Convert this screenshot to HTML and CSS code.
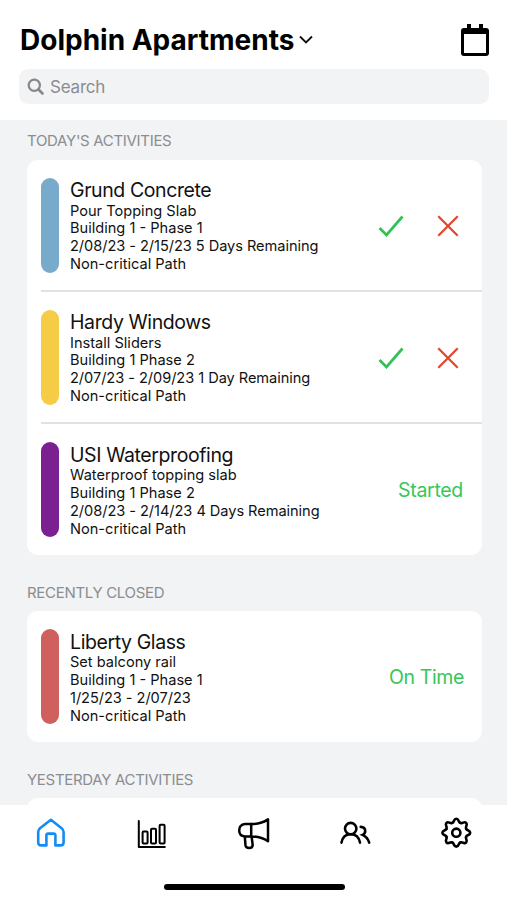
FILE: index.html
```html
<!DOCTYPE html>
<html lang="en">
<head>
<meta charset="utf-8">
<meta name="viewport" content="width=device-width, initial-scale=1">
<title>Dolphin Apartments</title>
<link rel="stylesheet" href="styles.css">
</head>
<body>
<div class="app">
  <header class="header">
    <div class="title-row">
      <h1 class="project">Dolphin Apartments</h1>
      <svg class="chevron" viewBox="0 0 16 12"><path d="M2 2.5 8 8.5 14 2.5" fill="none" stroke="#111" stroke-width="1.9"/></svg>
      <svg class="calendar" viewBox="0 0 30 34"><path d="M7 1h4v4h8V1h4v4h3q3 0 3 3v22q0 3-3 3H4q-3 0-3-3V8q0-3 3-3h3z" fill="#000"/><path d="M4 11h22v19H4z" fill="#fff"/></svg>
    </div>
    <label class="search">
      <svg class="search-icon" viewBox="0 0 18 18"><circle cx="7.3" cy="7.3" r="5.6" fill="none" stroke="#86888b" stroke-width="2.2"/><path d="M11.5 11.5 15.5 15.5" stroke="#86888b" stroke-width="2.6" stroke-linecap="round"/></svg>
      <span class="search-text">Search</span>
    </label>
  </header>

  <main class="feed">
    <h2 class="section-title">TODAY'S ACTIVITIES</h2>
    <section class="card">
      <article class="activity">
        <span class="bar blue"></span>
        <div class="info">
          <h3 class="name">Grund Concrete</h3>
          <p>Pour Topping Slab</p><p>Building 1 - Phase 1</p><p class="dates">2/08/23 - 2/15/23 5 Days Remaining</p><p>Non-critical Path</p>
        </div>
        <svg class="check" viewBox="0 0 26 22"><path d="M1.5 13 8.5 20 24.5 1.5" fill="none" stroke="#2fc356" stroke-width="2.7"/></svg>
        <svg class="cross" viewBox="0 0 22 22"><path d="M1.3 1.3 20.7 20.7M20.7 1.3 1.3 20.7" stroke="#e2472f" stroke-width="2.3"/></svg>
      </article>
      <article class="activity">
        <span class="bar yellow"></span>
        <div class="info">
          <h3 class="name">Hardy Windows</h3>
          <p>Install Sliders</p><p>Building 1 Phase 2</p><p class="dates">2/07/23 - 2/09/23 1 Day Remaining</p><p>Non-critical Path</p>
        </div>
        <svg class="check" viewBox="0 0 26 22"><path d="M1.5 13 8.5 20 24.5 1.5" fill="none" stroke="#2fc356" stroke-width="2.7"/></svg>
        <svg class="cross" viewBox="0 0 22 22"><path d="M1.3 1.3 20.7 20.7M20.7 1.3 1.3 20.7" stroke="#e2472f" stroke-width="2.3"/></svg>
      </article>
      <article class="activity">
        <span class="bar purple"></span>
        <div class="info">
          <h3 class="name">USI Waterproofing</h3>
          <p>Waterproof topping slab</p><p>Building 1 Phase 2</p><p class="dates">2/08/23 - 2/14/23 4 Days Remaining</p><p>Non-critical Path</p>
        </div>
        <span class="status">Started</span>
      </article>
    </section>

    <h2 class="section-title">RECENTLY CLOSED</h2>
    <section class="card">
      <article class="activity">
        <span class="bar red"></span>
        <div class="info">
          <h3 class="name">Liberty Glass</h3>
          <p>Set balcony rail</p><p>Building 1 - Phase 1</p><p class="dates">1/25/23 - 2/07/23</p><p>Non-critical Path</p>
        </div>
        <span class="status on-time">On Time</span>
      </article>
    </section>

    <h2 class="section-title">YESTERDAY ACTIVITIES</h2>
    <section class="card next"></section>
  </main>

  <nav class="tabs">
    <div class="tab-row">
      <svg class="tab" viewBox="0 0 34 34"><path d="M6 12.2 16.9 3.8 27.6 12.2Q29.6 13.8 29.6 16V26.2Q29.6 29.4 26.4 29.4H21.4V19.2Q21.4 17.6 19.6 17.6H14.2Q12.4 17.6 12.4 19.2V29.4H7.2Q4.2 29.4 4.2 26.2V16Q4.2 13.8 6 12.2Z" fill="none" stroke="#148cf5" stroke-width="2.6" stroke-linejoin="round"/></svg>
      <svg class="tab" viewBox="0 0 34 34"><g fill="none" stroke="#000" stroke-width="2" stroke-linecap="round" stroke-linejoin="round"><path d="M3.8 5V30.9H29.8"/><rect x="7.6" y="15.6" width="5" height="12" rx="1"/><rect x="16" y="12.8" width="5" height="14.8" rx="1"/><rect x="24.6" y="8.8" width="5" height="18.8" rx="1"/></g></svg>
      <svg class="tab" viewBox="0 0 34 34"><g fill="none" stroke="#000" stroke-width="2.5" stroke-linejoin="round"><path d="M14.2 8H8Q2.2 8.8 2.2 14.4T8 20.4H14.2ZM14.2 8Q24 8.2 31 3.4V25.2Q24 20.7 14.2 20.4"/><path d="M7.8 20.6 8.5 29.4Q8.8 32 12.2 32T15.7 29L14.6 20.6"/></g></svg>
      <svg class="tab" viewBox="0 0 34 34"><g fill="none" stroke="#000" stroke-width="2.6" stroke-linecap="round"><circle cx="12.7" cy="12.6" r="5.7"/><path d="M3.5 26.6Q5 18.3 12.7 18.3T22 26.6"/><path d="M22.7 10.9Q27.2 11.1 27.2 15 27.2 17.8 24.6 18.9 29.5 21.1 31.2 26.6"/></g></svg>
      <svg class="tab" viewBox="-17.3 -16.7 34 34"><defs><path id="tooth" d="M-4.06-9.8C-1.6-10.8-2.9-13.9 0-13.9S1.6-10.8 4.06-9.8"/></defs><g fill="none" stroke="#000" stroke-width="2.6" stroke-linecap="round"><use href="#tooth"/><use href="#tooth" transform="rotate(45)"/><use href="#tooth" transform="rotate(90)"/><use href="#tooth" transform="rotate(135)"/><use href="#tooth" transform="rotate(180)"/><use href="#tooth" transform="rotate(225)"/><use href="#tooth" transform="rotate(270)"/><use href="#tooth" transform="rotate(315)"/><circle r="4.1"/></g></svg>
    </div>
    <div class="home-bar"></div>
  </nav>
</div>
</body>
</html>
```
FILE: styles.css
```css
* { box-sizing: border-box; }
body, h1, h2, h3, p { margin: 0; }
body {
  font-family: Inter, "Liberation Sans", sans-serif;
  color: #111;
  background: #fff;
}
svg { display: block; flex: none; }
.app {
  width: 507px;
  height: 900px;
  display: flex;
  flex-direction: column;
  overflow: hidden;
}
.header { height: 120px; flex: none; padding: 22px 17px 0 19px; }
.title-row { display: flex; align-items: center; height: 35px; }
.project {
  padding: 2px 0 0 1px;
  font-size: 28px;
  line-height: 35px;
  font-weight: 700;
  color: #000;
  white-space: nowrap;
}
.chevron { width: 16px; height: 12px; margin-left: 4px; }
.calendar { width: 30px; height: 34px; margin-left: auto; }
.search {
  display: flex;
  align-items: center;
  height: 35px;
  margin-top: 12px;
  margin-right: 1px;
  padding-left: 8px;
  gap: 5px;
  border-radius: 9px;
  background: #f1f3f4;
}
.search-icon { width: 18px; height: 18px; }
.search-text { font-size: 17px; line-height: 20px; letter-spacing: -0.2px; color: #8b8d90; }
.feed {
  height: 685px;
  flex: none;
  overflow: hidden;
  padding: 0 25px 0 27px;
  background: #f1f3f4;
}
.section-title {
  height: 40px;
  padding-top: 11px;
  font-size: 15px;
  line-height: 20px;
  font-weight: 400;
  letter-spacing: -0.31px;
  color: #8b8d90;
  white-space: nowrap;
}
.card + .section-title { height: 56px; padding-top: 28px; }
.card { border-radius: 11px; background: #fff; }
.next { height: 40px; }
.activity {
  display: flex;
  align-items: center;
  height: 132px;
  margin-left: 14px;
  padding-right: 19px;
  border-bottom: 2px solid #e0e1e3;
}
.activity:last-child { height: 131px; border-bottom: 0; }
.bar { width: 18px; height: 95px; border-radius: 9px; flex: none; }
.blue { background: #78aacb; }
.yellow { background: #f6cb45; }
.purple { background: #7b2090; }
.red { background: #d0605e; }
.info { flex: 1; margin-left: 11px; padding-top: 2px; white-space: nowrap; }
.name {
  font-size: 19.5px;
  line-height: 24.4px;
  font-weight: 400;
  letter-spacing: -0.4px;
}
.info p { font-size: 14.6px; line-height: 17.8px; }
.info .dates { letter-spacing: -0.05px; }
.check { width: 26px; height: 22px; margin: 2px 33px 0 0; }
.cross { width: 22px; height: 22px; margin: 2px 4px 0 0; }
.status { font-size: 19.5px; letter-spacing: -0.3px; color: #35c759; }
.on-time { margin-right: -1px; padding-top: 1px; letter-spacing: -0.4px; }
.tabs { height: 95px; flex: none; background: #fff; }
.tab-row { display: flex; justify-content: space-between; padding: 11px 34px 0; }
.tab { width: 34px; height: 34px; }
.home-bar { width: 181px; height: 6px; margin: 34px 0 0 164px; border-radius: 3px; background: #000; }
```
